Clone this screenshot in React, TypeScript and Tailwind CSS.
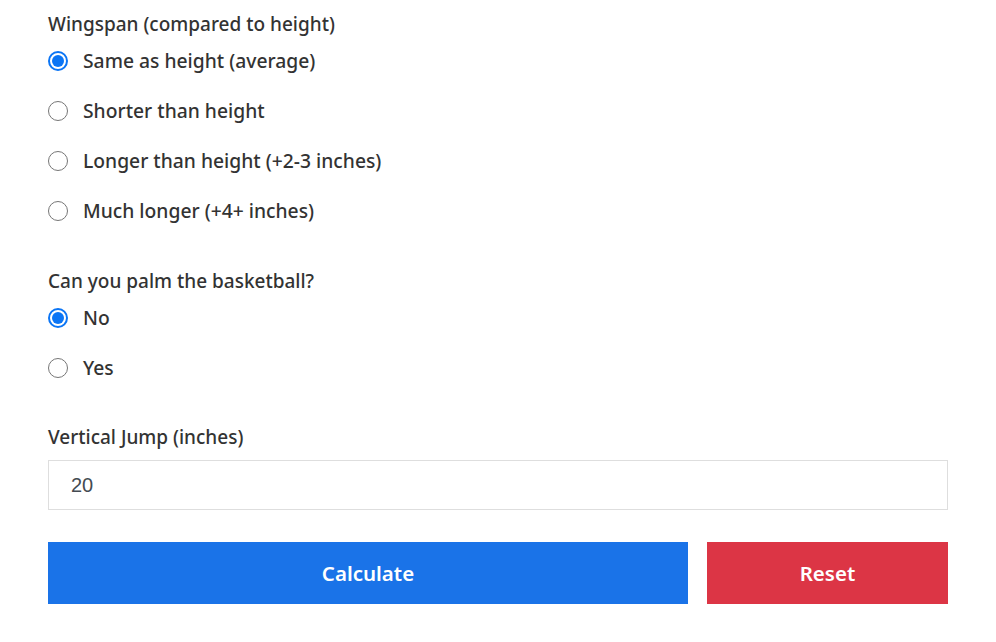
import React from "react";

const font = { fontFamily: '"Noto Sans", "Open Sans", Arial, sans-serif' };

function Radio({ label, checked }: { label: string; checked?: boolean }) {
  return (
    <div className="flex h-[50px] items-center">
      {checked ? (
        <span className="flex h-[20px] w-[20px] items-center justify-center rounded-full border-[2px] border-[#0b75f5] bg-white">
          <span className="h-[12px] w-[12px] rounded-full bg-[#0b75f5]" />
        </span>
      ) : (
        <span className="h-[20px] w-[20px] rounded-full border-[1.5px] border-[#767676] bg-white" />
      )}
      <span className="ml-[15px] text-[19.3px] font-medium text-[#333333]">{label}</span>
    </div>
  );
}

export default function App() {
  return (
    <div className="min-h-[642px] w-full bg-white" style={font}>
      <div className="mx-[48px] w-[900px] pt-[12px]">
        <div className="h-[24px] text-[19px] leading-[24px] font-medium text-[#333333]">
          Wingspan (compared to height)
        </div>
        <Radio label="Same as height (average)" checked />
        <Radio label="Shorter than height" />
        <Radio label="Longer than height (+2-3 inches)" />
        <Radio label="Much longer (+4+ inches)" />

        <div className="mt-[33px] h-[24px] text-[19px] leading-[24px] font-medium text-[#333333]">
          Can you palm the basketball?
        </div>
        <Radio label="No" checked />
        <Radio label="Yes" />

        <div className="mt-[32px] h-[24px] text-[19px] leading-[24px] font-medium text-[#333333]">
          Vertical Jump (inches)
        </div>
        <div className="mt-[11px] flex h-[50px] items-center border border-[#dedede] bg-white pl-[22px]">
          <span className="text-[20px] text-[#444b52]" style={{ fontFamily: '"Liberation Sans", Arial, sans-serif' }}>
            20
          </span>
        </div>

        <div className="mt-[32px] flex gap-[19px]">
          <button className="h-[62px] w-[640px] bg-[#1a73e8] text-[20.5px] font-semibold text-white">
            Calculate
          </button>
          <button className="h-[62px] w-[241px] bg-[#dc3545] text-[20.5px] font-semibold text-white">
            Reset
          </button>
        </div>
      </div>
    </div>
  );
}
